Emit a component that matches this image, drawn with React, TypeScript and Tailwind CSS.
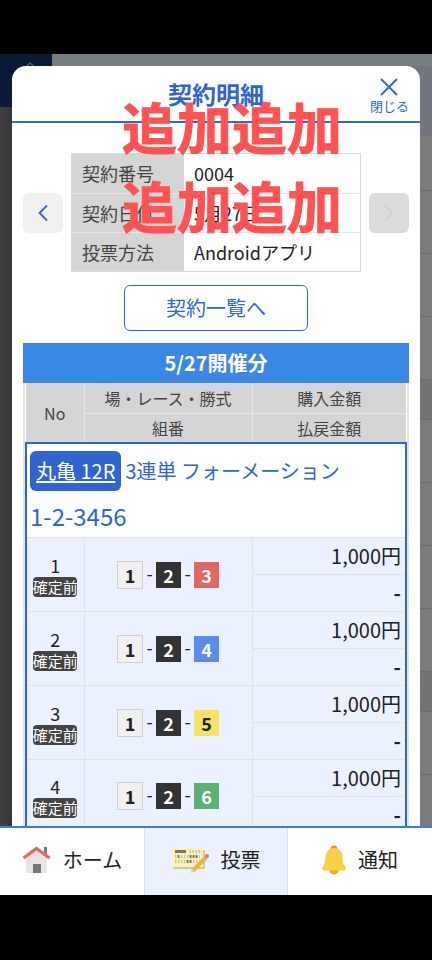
import { ReactNode } from "react";
import clsx from "clsx";

interface Bet {
  no: number;
  boats: number[];
  amount: string;
  refund: string;
}

const bets: Bet[] = [
  { no: 1, boats: [1, 2, 3], amount: "1,000円", refund: "-" },
  { no: 2, boats: [1, 2, 4], amount: "1,000円", refund: "-" },
  { no: 3, boats: [1, 2, 5], amount: "1,000円", refund: "-" },
  { no: 4, boats: [1, 2, 6], amount: "1,000円", refund: "-" },
];

const details = [
  { label: "契約番号", value: "0004" },
  { label: "契約日付", value: "5月27日" },
  { label: "投票方法", value: "Androidアプリ" },
];

const boatColors: Record<number, string> = {
  1: "h-7 w-[26px] border border-[#d0d0d0] bg-[#f1f1f1] text-[#222]",
  2: "h-[26px] w-[25px] bg-[#333] text-white",
  3: "h-[26px] w-[25px] bg-[#e06765] text-white",
  4: "h-[26px] w-[25px] bg-[#598cec] text-white",
  5: "h-[26px] w-[25px] bg-[#f6e366] text-[#222]",
  6: "h-[26px] w-[25px] bg-[#5bb075] text-white",
};

function HomeIcon() {
  return (
    <svg width="29" height="28" viewBox="0 0 29 28" aria-hidden="true">
      <path d="M22 1h3v8l-3-3z" fill="#777" />
      <path d="M4 11 14.500 3 25 11v16H4z" fill="#e9e5e0" />
      <path d="M11 18h8v9h-8z" fill="#777" />
      <path d="M1.500 12 14.500 2.500 27.500 12" fill="none" stroke="#dd6b60" strokeWidth="3.200" />
    </svg>
  );
}

function TicketIcon() {
  return (
    <svg width="37" height="26" viewBox="0 0 37 26" aria-hidden="true">
      <path d="M1 3h32v19H1z" fill="#d3cb8c" />
      <path d="M0 1h31v19H0z" fill="#fbf1bd" />
      <path d="M3 3h11v3H3z" fill="#777466" />
      <path d="M17.500 4.500H30" stroke="#c9c29c" strokeWidth="3" strokeDasharray="1.500 1.500" />
      <path d="M3 9.500H28M3 14.500H28" stroke="#cfc8a0" strokeWidth="3.500" strokeDasharray="1.500 1.500" />
      <path d="M6.500 8v3M18.500 8v3M21.500 8v3M24.500 8v3M15.500 13v3M18.500 13v3" stroke="#77735f" strokeWidth="1.800" />
      <path d="m20 21.500 12-12 3 3L23 24.500l-3 1z" fill="#e3b93c" />
      <path d="m18.500 26 1.500-4.500 3 3z" fill="#d8d0bc" />
      <path d="m31.500 10 1.500-1.500 3 3-1.500 1.500z" fill="#bbb" />
      <circle cx="35" cy="9" r="2" fill="#e0736a" />
    </svg>
  );
}

function BellIcon() {
  return (
    <svg width="24" height="30" viewBox="0 0 24 30" aria-hidden="true">
      <circle cx="12" cy="4" r="3.500" fill="#ea8f3c" />
      <circle cx="12" cy="24.500" r="5" fill="#f2a33b" />
      <path
        d="M12 3c5 0 8 3.500 8.500 8.500.3 5 .7 8 2.700 10.500 1.200 1.700.5 3.500-1.700 3.500h-19C.3 25.500-.4 23.700.8 22c2-2.500 2.400-5.500 2.700-10.500C4 6.500 7 3 12 3z"
        fill="#f8d147"
      />
    </svg>
  );
}

function Chevron({ direction }: { direction: "left" | "right" }) {
  return (
    <svg width="10" height="18" viewBox="0 0 10 18" fill="none" stroke="currentColor" strokeWidth="1.800" aria-hidden="true">
      <path d={direction === "left" ? "M9 1.500 1.500 9 9 16.500" : "M1 1.500 8.500 9 1 16.500"} />
    </svg>
  );
}

// Page behind the modal, already dimmed
function Backdrop() {
  return (
    <div className="absolute inset-0 flex flex-col bg-[#7b7b7b]" aria-hidden="true">
      <div className="flex h-[82px] bg-[#70757e]">
        <div className="flex h-[53px] w-[52px] items-start justify-center bg-[#0a1a35] pt-2 pl-2">
          <svg width="18" height="16" viewBox="0 0 18 16" fill="none" stroke="#55595c" strokeWidth="1.500">
            <path d="m1 8 8-7 8 7" />
          </svg>
        </div>
        <div className="h-3 flex-1 bg-[#797c80]" />
      </div>
      <div className="h-[55px] border-b border-[#6c6c6c]" />
      <div className="h-[63px] border-b border-[#6c6c6c]" />
      <div className="h-[63px] border-b border-[#6c6c6c]" />
      <div className="h-[63px] border-b border-[#6c6c6c]" />
      <div className="h-10 border-b border-[#6c6c6c] bg-[#737373]" />
      <div className="h-[63px] border-b border-[#6c6c6c]" />
      <div className="h-[63px] border-b border-[#6c6c6c]" />
      <div className="h-[63px] border-b border-[#6c6c6c]" />
      <div className="h-[63px] border-b border-[#6c6c6c]" />
      <div className="h-10 border-b border-[#6c6c6c] bg-[#737373]" />
      <div className="h-[63px] border-b border-[#6c6c6c]" />
      <div className="absolute top-[53px] bottom-0 left-0 w-3 bg-linear-to-r from-[#404040] to-[#353535]" />
    </div>
  );
}

function Boats({ boats }: { boats: number[] }) {
  return (
    <div className="flex items-center justify-center text-lg font-bold">
      {boats.map((boat, i) => (
        <div key={boat} className="flex items-center">
          {i > 0 && <span className="w-[13px] pb-1 text-center text-lg leading-6 font-normal">-</span>}
          <span className={clsx("flex items-center justify-center", boatColors[boat])}>{boat}</span>
        </div>
      ))}
    </div>
  );
}

function BetRows({ bet }: { bet: Bet }) {
  return (
    <>
      <tr className="h-[37px] border-t border-[#e2e2e2] bg-[#ebf1fe]">
        <td rowSpan={2} className="border-r border-[#e2e2e2] p-0 text-center">
          <div className="text-lg leading-6">{bet.no}</div>
          <div className="mx-auto flex h-5 w-11 justify-center overflow-hidden rounded bg-[#444] text-[15px] leading-5 whitespace-nowrap text-white">
            確定前
          </div>
        </td>
        <td rowSpan={2} className="border-r border-[#e2e2e2] p-0">
          <Boats boats={bet.boats} />
        </td>
        <td className="border-b border-[#e2e2e2] p-0 pr-1 text-right text-xl leading-7">{bet.amount}</td>
      </tr>
      <tr className="h-[37px] bg-[#ebf1fe]">
        <td className="p-0 pr-1 text-right text-xl leading-7 font-bold">{bet.refund}</td>
      </tr>
    </>
  );
}

function NavItem({ icon, label, active }: { icon: ReactNode; label: string; active?: boolean }) {
  return (
    <a
      href="#"
      aria-current={active ? "page" : undefined}
      className={clsx(
        "flex items-center justify-center gap-3 pb-[3px] text-xl",
        active ? "border-x border-[#dde0e6] bg-[#ebf1fe]" : "bg-white"
      )}
    >
      {icon}
      {label}
    </a>
  );
}

export default function App() {
  return (
    <div className="relative flex h-screen flex-col bg-black pt-[54px] pb-[65px] font-['Noto_Sans_CJK_JP',sans-serif] text-[#222]">
      <main className="relative min-h-0 flex-1 overflow-hidden">
        <Backdrop />

        <section role="dialog" aria-labelledby="dialog-title" className="relative mx-3 mt-3 rounded-t-[14px] bg-white">
          <header className="grid h-[57px] grid-cols-3 items-center border-b-2 border-[#3367d1] text-[#3065d0]">
            <h1 id="dialog-title" className="col-start-2 text-center text-2xl font-bold">
              契約明細
            </h1>
            <button type="button" className="flex flex-col items-center justify-self-end pt-[7px] pr-[11px] text-[13px] leading-5">
              <svg width="18" height="18" viewBox="0 0 18 18" fill="none" stroke="currentColor" strokeWidth="1.800" aria-hidden="true">
                <path d="m1 1 16 16M17 1 1 17" />
              </svg>
              閉じる
            </button>
          </header>

          <div className="px-[11px] pt-[30px]">
            <div className="flex items-center gap-2">
              <button
                type="button"
                aria-label="前の契約"
                className="flex size-10 items-center justify-center rounded-md bg-[#f1f1f1] text-[#3065d0]"
              >
                <Chevron direction="left" />
              </button>
              <div className="flex-1 border border-[#dbdbdb]">
                <table className="w-full border-collapse text-lg leading-6">
                  <tbody className="divide-y divide-[#e6e6e6]">
                    {details.map((row) => (
                      <tr key={row.label} className="h-[39px]">
                        <th scope="row" className="w-[112px] bg-[#d5d5d5] p-0 pl-[10px] text-left font-normal text-[#444]">
                          {row.label}
                        </th>
                        <td className="p-0 pl-[10px]">{row.value}</td>
                      </tr>
                    ))}
                  </tbody>
                </table>
              </div>
              <button
                type="button"
                aria-label="次の契約"
                disabled
                className="flex size-10 items-center justify-center rounded-md bg-[#dbdbdb] text-[#d0d0d0]"
              >
                <Chevron direction="right" />
              </button>
            </div>

            <button
              type="button"
              className="mx-auto mt-[13px] flex h-[46px] w-[184px] items-center justify-center rounded-md border border-[#3065d0] text-xl text-[#3065d0]"
            >
              契約一覧へ
            </button>

            <h2 className="mt-3 bg-[#3b88e4] text-center text-xl leading-10 font-bold text-white">5/27開催分</h2>

            <div className="border-x-2 border-[#e2e2e2]">
              <table className="w-full table-fixed border-collapse">
                <colgroup>
                  <col className="w-[58px]" />
                  <col className="w-[168px]" />
                  <col />
                </colgroup>
                <thead className="bg-[#d5d5d5] text-base leading-6 text-[#444]">
                  <tr className="h-[30px]">
                    <th rowSpan={2} className="border-r border-[#e6e6e6] p-0 font-normal">No</th>
                    <th className="border-r border-b border-[#e6e6e6] p-0 font-normal">場・レース・勝式</th>
                    <th className="border-b border-[#e6e6e6] p-0 font-normal">購入金額</th>
                  </tr>
                  <tr className="h-[30px]">
                    <th className="border-r border-[#e6e6e6] p-0 font-normal">組番</th>
                    <th className="p-0 font-normal">払戻金額</th>
                  </tr>
                </thead>
                <tbody className="border-2 border-[#3065d0]">
                  <tr>
                    <td colSpan={3} className="bg-white px-[3px] pt-[7px] pb-[3px] text-[#3065d0]">
                      <div className="flex items-center gap-1 text-xl">
                        <a href="#" className="rounded-md bg-[#3065d0] px-[6px] leading-10 text-white underline underline-offset-2">
                          丸亀 12R
                        </a>
                        <span>3連単 フォーメーション</span>
                      </div>
                      <div className="mt-[7px] text-2xl leading-9">1-2-3456</div>
                    </td>
                  </tr>
                  {bets.map((bet) => (
                    <BetRows key={bet.no} bet={bet} />
                  ))}
                </tbody>
              </table>
            </div>
          </div>
        </section>
      </main>

      <nav className="relative grid h-[69px] grid-cols-3 border-t-2 border-[#4478d8]">
        <NavItem icon={<HomeIcon />} label="ホーム" />
        <NavItem icon={<TicketIcon />} label="投票" active />
        <NavItem icon={<BellIcon />} label="通知" />
      </nav>

      <p className="pointer-events-none absolute top-[86px] left-[122px] text-[55px] leading-[79px] font-bold whitespace-nowrap text-[#ff5252] [-webkit-text-stroke:1px_#ff5252]">
        追加追加
        <br />
        追加追加
      </p>
    </div>
  );
}
